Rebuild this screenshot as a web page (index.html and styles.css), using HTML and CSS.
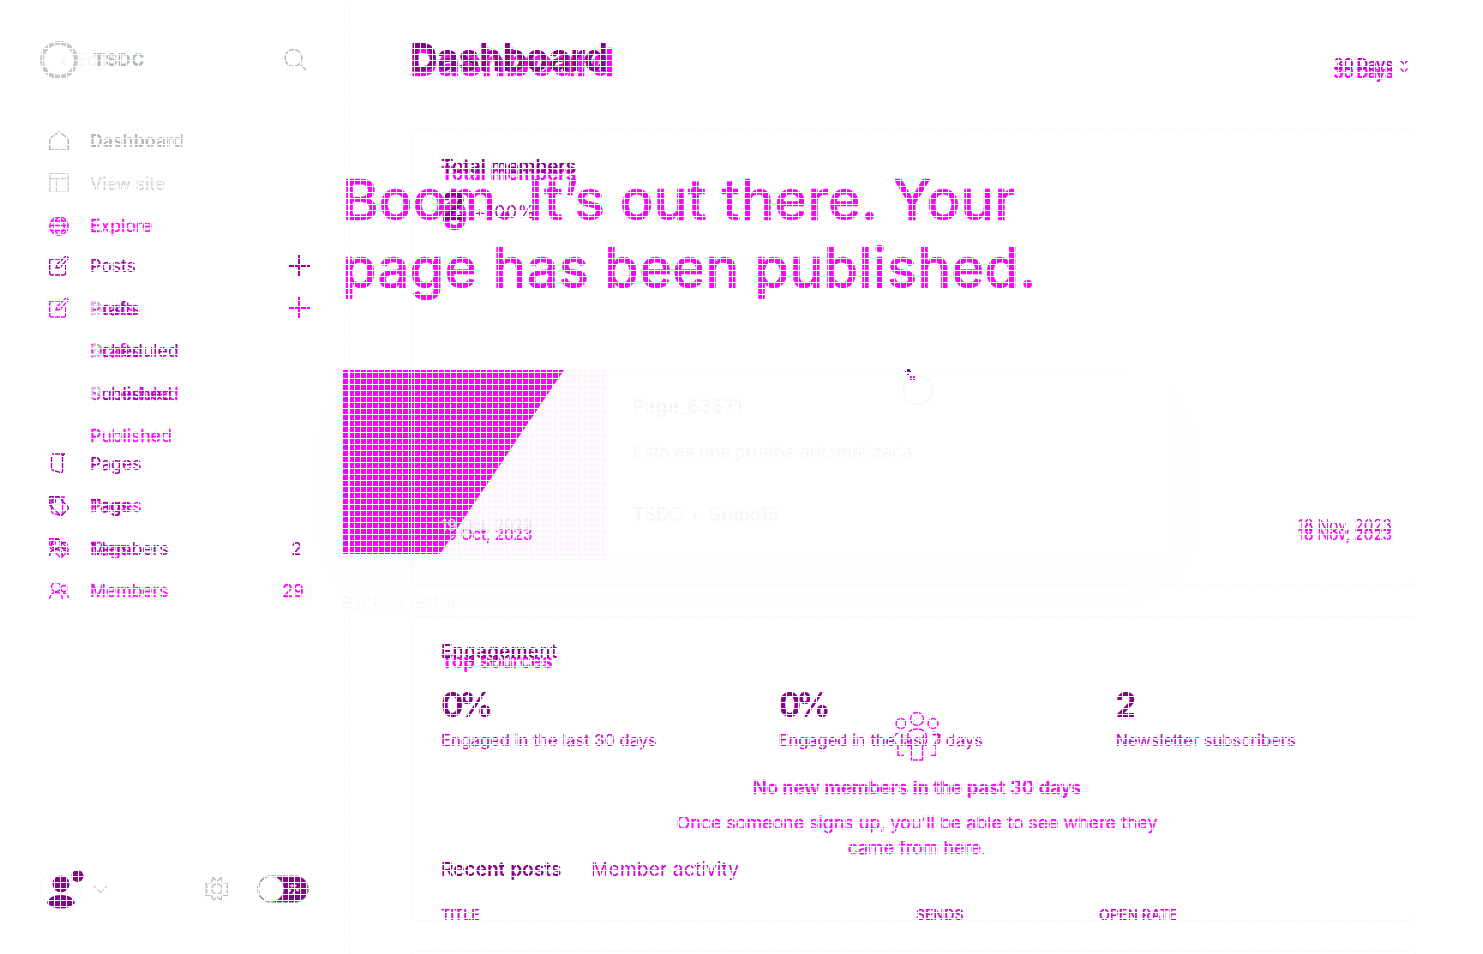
FILE: index.html
```html
<!DOCTYPE html>
<html lang="en">
<head>
<meta charset="utf-8">
<title>Dashboard</title>
<link rel="stylesheet" href="styles.css">
</head>
<body>
<svg width="0" height="0" class="defs">
  <symbol id="home" viewBox="0 0 20 20"><path d="M.7 19V7.5L10 .8l9.3 6.7V19z"/></symbol>
  <symbol id="layout" viewBox="0 0 20 20"><path d="M.7.7h18.6v18.6H.7zM.7 5.5h18.6M7.5 5.5v13.8"/></symbol>
  <symbol id="globe" viewBox="0 0 20 20"><circle cx="10" cy="10" r="9.2"/><path d="M.8 9.500h18.4M2.5 5h15M2.5 14.500h15M10 .8c-7 6-7 12.400 0 18.400M10 .8c7 6 7 12.400 0 18.400"/></symbol>
  <symbol id="edit" viewBox="0 0 20 20"><path d="M12 3H2.500Q.7 3 .7 5v12q0 2 2 2h12q2 0 2-2V8M7 12l1-3.500L17 0l2.500 2-8.500 9.500z"/></symbol>
  <symbol id="pages" viewBox="0 0 20 20"><path d="M3 1h13M2.500 3v12q0 2 2 2.500l7 2q2 .5 2-2V1M16 1q-2 0-2 3"/></symbol>
  <symbol id="tag" viewBox="0 0 20 20"><path d="M.8.8h8.500L19 11q1 1 0 2l-6 6q-1 1-2 0L.8 9z"/><circle cx="5" cy="5" r="1.500"/></symbol>
  <symbol id="members" viewBox="0 0 20 20"><circle cx="7" cy="6" r="4.500"/><circle cx="15" cy="7.500" r="3"/><path d="M.7 18q0-6.500 6.300-6.500T13.300 18M14 12q5 0 5.300 5"/></symbol>
  <symbol id="plus" viewBox="0 0 22 22"><path d="M11 0v22M0 11h22"/></symbol>
</svg>

<div class="screen">
  <!-- publish confirmation -->
  <section class="layer publish">
    <h1 class="boom">Boom. It’s out there. Your<br><span>page has been published.</span></h1>
    <div class="preview">
      <svg class="cover" viewBox="0 0 265 185"><path d="M0 0h221L97 184H0z"/></svg>
      <div class="meta">
        <p class="m1">Page_63571</p>
        <p class="m2">Esto es una prueba automatizada</p>
        <p class="m3"><b>TSDC</b><b>•</b><span>Grupo16</span></p>
      </div>
    </div>
    <p class="back">Back to editor</p>
  </section>

  <!-- newer dashboard -->
  <div class="layer shell new">
    <aside class="side">
      <p class="editor">‹&nbsp; Editor</p>
      <nav>
        <div class="row third"><svg><use href="#globe"/></svg><span>Explore</span></div>
        <div class="row group"><svg><use href="#edit"/></svg><span>Posts</span><svg class="plus"><use href="#plus"/></svg></div>
        <div class="row sub"><span>Drafts</span></div>
        <div class="row sub"><span>Scheduled</span></div>
        <div class="row sub"><span>Published</span></div>
        <div class="row pg"><svg><use href="#pages"/></svg><span>Pages</span></div>
        <div class="row"><svg><use href="#tag"/></svg><span>Tags</span></div>
        <div class="row"><svg><use href="#members"/></svg><span>Members</span><em class="badge">29</em></div>
      </nav>
    </aside>
    <main class="main">
      <header class="head"><h2>Dashboard</h2><span class="days"><span>30 Days</span><svg class="chev" viewBox="0 0 8 5"><path d="M.5.5 4 4 7.500.5"/></svg></span></header>
      <h3 class="total">Total members</h3>
      <p class="big">0</p>
      <div class="dates"><span>19 Oct, 2023</span><span>18 Nov, 2023</span></div>
      <h3 class="sources">Top sources</h3>
      <div class="empty">
        <svg class="people" viewBox="0 0 48 49"><circle cx="24" cy="7" r="6.500"/><circle cx="8" cy="11.500" r="5"/><circle cx="40" cy="11.500" r="5"/><path d="M18.500 48V34q-4-1-4-6v-3q0-8 9.500-8t9.500 8v3q0 5-4 6v14zM11 43.500H5V33q-4-1-4-6 0-6 7-7M37 43.500h6V33q4-1 4-6 0-6-7-7"/></svg>
        <b>No new members in the past 30 days</b>
        <p>Once someone signs up, you’ll be able to see where they<br>came from here.</p>
      </div>
    </main>
  </div>

  <!-- earlier dashboard -->
  <div class="layer shell old">
    <aside class="side ruled">
      <div class="brand"><i class="ring"></i><b>TSDC</b><svg class="search" viewBox="0 0 22 22"><circle cx="9.500" cy="9" r="8.500"/><path d="m16 15 6 6"/></svg></div>
      <nav>
        <div class="row on"><svg><use href="#home"/></svg><b>Dashboard</b></div>
        <div class="row dim"><svg><use href="#layout"/></svg><span>View site</span></div>
        <div class="row group"><svg><use href="#edit"/></svg><span>Posts</span><svg class="plus"><use href="#plus"/></svg></div>
        <div class="row sub"><span><i>D</i>rafts</span></div>
        <div class="row sub"><span><i>S</i>cheduled</span></div>
        <div class="row sub"><span><i>P</i>ublished</span></div>
        <div class="row pg"><svg><use href="#pages"/></svg><span>Pages</span></div>
        <div class="row"><svg><use href="#tag"/></svg><span>Tags</span></div>
        <div class="row"><svg><use href="#members"/></svg><span>Members</span><em>2</em></div>
      </nav>
      <div class="foot">
        <svg class="avatar" viewBox="0 0 70 44"><circle class="halo" cx="21" cy="22" r="20.500"/><circle cx="21" cy="17" r="8.500"/><path d="M7 36q2-8 14-8t14 8q-5 5.500-14 5.500T7 36z"/><circle cx="37.500" cy="9" r="6"/><path class="line" d="m54 19 6.500 6.500L67 19"/></svg>
        <svg class="gear" viewBox="0 0 26 26"><circle cx="13" cy="13" r="5.200"/><path d="m9 1.500 4 3.500 4-3.500 1.500 5.500 6-.5-1.500 4.500 1.500 2-1.500 2 1.500 4.500-6-.5-1.500 5.500-4-3.500-4 3.500L7.500 19l-6 .5L3 15l-1.500-2L3 11 1.500 6.500l6 .5z"/></svg>
        <div class="toggle"><i></i><span></span></div>
      </div>
    </aside>
    <main class="main">
      <header class="head"><h2>Dashboard</h2><span class="days"><span>30 Days</span><svg class="chev" viewBox="0 0 8 5"><path d="M.5.5 4 4 7.500.5"/></svg></span></header>
      <section class="card c1">
        <h3 class="total">Total members</h3>
        <p class="big"><span>2</span><small>+100%</small></p>
        <div class="dates"><span>19 Oct, 2023</span><span>18 Nov, 2023</span></div>
      </section>
      <section class="card c2">
        <h3 class="eng">Engagement</h3>
        <div class="stats">
          <div><b>0%</b><span>Engaged in the last 30 days</span></div>
          <div><b>0%</b><span>Engaged in the last 7 days</span></div>
          <div><b>2</b><span>Newsletter subscribers</span></div>
        </div>
        <div class="tabs"><b>Recent posts</b><span>Member activity</span></div>
        <div class="cols"><span>TITLE</span><span>SENDS</span><span>OPEN RATE</span></div>
      </section>
      <section class="card c3"></section>
    </main>
  </div>
  <div class="layer spot"><svg viewBox="0 0 32 40"><circle class="o" cx="15" cy="22" r="14.500"/><path class="a" d="M4 1h3v2h1v2H4zM2 3h1v1H2zM4 6h2v1H4z"/><path class="b" d="M7 8h5v4H7z"/></svg></div>
  <div class="layer mesh"></div>
</div>
</body>
</html>
```
FILE: styles.css
```css
* { box-sizing: border-box; margin: 0; padding: 0; }
body { background: #fff; font-family: Inter, "Liberation Sans", sans-serif; overflow: hidden; }
i, em { font-style: normal; }
svg { fill: none; stroke: currentColor; stroke-width: 1.4; flex: none; overflow: visible; }
.defs { position: absolute; }
.screen { position: relative; width: 1483px; height: 954px; overflow: hidden; }
.layer { position: absolute; inset: 0; }
.mesh {
  background:
    repeating-linear-gradient(90deg, #fff 0 1px, transparent 1px 6px),
    repeating-linear-gradient(#fff 0 1px, transparent 1px 6px);
}

/* publish confirmation */
.publish { padding: 166px 0 0 343px; color: #f5f5f5; }
.boom { font-size: 56px; line-height: 68px; font-weight: 500; letter-spacing: .05px; color: #f0f; -webkit-text-stroke: .5px #f0f; white-space: nowrap; height: 204px; margin-left: -1px; }
.boom span { letter-spacing: .25px; }
.preview { display: flex; width: 826px; height: 185px; background: #fff; box-shadow: 0 25px 70px rgba(0,0,0,.018); }
.cover { width: 265px; height: 185px; background: #faf6fb; fill: #f0f; stroke: none; }
.meta { padding: 25px 0 0 25px; }
.m1 { font-size: 19px; font-weight: 600; line-height: 24px; }
.m2 { font-size: 17.8px; line-height: 24px; margin-top: 21px; }
.m3 { display: flex; gap: 8px; font-size: 18px; line-height: 24px; margin-top: 39px; }
.m3 b { font-weight: 600; }
.back { font-size: 17.8px; line-height: 24px; margin: 36px 0 0 -2px; color: #f8f8f8; }

/* dashboards */
.shell { display: flex; }
.side { display: flex; flex-direction: column; width: 350px; height: 954px; }
.ruled { border-right: 1px solid #f7f7f7; }
.new { color: #f0f; -webkit-text-stroke: .3px; }
.old { color: #a800a8; }
.old .row.group, .old .row.sub, .old .row.pg, .old .row.pg ~ .row { -webkit-text-stroke: .2px; }
.row { display: flex; align-items: center; height: 42.5px; padding: 0 39px 0 49px; font-size: 17.6px; }
.row svg { width: 20px; height: 20px; margin-right: 21px; }
.row .plus { width: 22px; height: 22px; margin: 0 1px 0 auto; stroke-width: 2; }
.ruled .row .plus { margin-right: 0; }
.row em { margin: 0 9px 0 auto; }
.row .badge { margin: 0 -2px 0 auto; padding: 0 9px 0 10px; line-height: 28px; border-radius: 14px; background: #fafcfc; }
.ruled .row em { margin-right: 8px; }
.row.sub { padding-left: 90px; }
.row.sub i { color: #ccc; }
.row.pg { margin-top: 27.5px; }
.on { color: #b4b4b4; }
.on b { font-weight: 600; letter-spacing: .1px; }
.dim { color: #cfcfcf; }
.new nav { padding-top: 132.5px; }
.row.group { margin-top: 40.5px; }
.new .row.group { margin-top: 40px; }
.ruled .row.group { margin-top: 40.2px; }
.editor { height: 72px; padding: 47px 0 0 60px; font-size: 17.5px; line-height: 25px; color: #f3f3f3; }
.brand { display: flex; align-items: center; height: 119.5px; padding-left: 40px; color: #b4b4b4; font-size: 18px; }
.brand b { letter-spacing: .4px; }
.ring { width: 38px; height: 38px; border: 4px solid #c8c8c8; border-radius: 50%; margin-right: 15px; }
.search { width: 22px; height: 22px; margin-left: auto; margin-right: 43px; }
.foot { display: flex; align-items: center; height: 44px; padding-left: 40px; margin: auto 0 43px; color: #bbb; }
.avatar { width: 70px; height: 44px; fill: #8b008b; stroke: none; }
.avatar .halo { fill: none; stroke: #f7f7f7; }
.avatar .line { fill: none; stroke: #ccc; stroke-width: 1.3; }
.gear { width: 26px; height: 26px; margin-left: 94px; }
.toggle { display: flex; align-items: center; justify-content: space-between; width: 52px; height: 28px; margin-left: 27px; border: 1px solid #bbb; border-radius: 14px; background: #8b008b; padding-right: 9px; }
.toggle i { width: 26px; height: 26px; border-radius: 50%; background: #fff; border: 1px solid #bbb; }
.toggle span { width: 11px; height: 11px; border: 3px dotted #ddd; border-radius: 50%; }

.main { flex: 1; }
.head { display: flex; justify-content: space-between; padding: 0 75px 0 60px; }
.head h2 { font-size: 38px; line-height: 46px; font-weight: 700; letter-spacing: -.6px; color: #8b008b; }
.days { display: flex; align-items: center; gap: 7px; font-size: 16.3px; font-weight: 600; letter-spacing: -.7px; height: 24px; }
.chev { width: 8px; height: 5px; margin-top: -4px; }
.old .head { padding-top: 34px; height: 129px; }
.old .days { margin-top: 18px; color: #b800b8; }
.new .head { padding-top: 39px; height: 129px; }
.new .head h2 { font-size: 38.6px; letter-spacing: -.1px; color: #f0f; }
.new .days { margin-top: 21px; }
h3 { font-size: 18.8px; line-height: 24px; font-weight: 600; }
.eng { letter-spacing: .2px; }
.big { font-size: 40px; line-height: 48px; font-weight: 700; }
.c1 .big { display: flex; }
.big small { font-size: 17.5px; font-weight: 400; line-height: 20px; margin: 20px 0 0 8px; letter-spacing: .7px; color: #a800a8; }
.dates { display: flex; justify-content: space-between; font-size: 15.2px; line-height: 20px; }
.card { width: 1006px; margin-left: 61px; border: 1px solid #f8f8f8; border-radius: 6px; padding: 0 24px 0 29px; color: #8b008b; }
.c1 { height: 457px; padding-top: 25px; }
.c1 .big { margin-top: 3px; }
.c1 .dates { margin-top: 286px; color: #c0c; }
.c1 .dates span:first-child { color: #e4e4e4; }
.c2 { height: 305px; margin-top: 30px; padding-top: 23px; }
.c3 { height: 30px; margin-top: 30px; }
.stats { display: grid; grid-template-columns: 337.5px 337px 1fr; margin-top: 21px; margin-right: -24px; }
.stats b { display: block; font-size: 33.5px; line-height: 40px; font-weight: 700; letter-spacing: -4.5px; }
.stats span { display: block; width: max-content; font-size: 16.5px; line-height: 24px; margin-top: 3px; color: #c0c; -webkit-text-stroke: .2px; }
.tabs { display: flex; gap: 30px; font-size: 19.1px; line-height: 24px; margin-top: 105px; }
.tabs b { font-weight: 600; }
.tabs span { color: #d000d0; letter-spacing: .15px; }
.cols { display: grid; grid-template-columns: 475px 183px 1fr; font-size: 14.1px; font-weight: 500; line-height: 20px; margin-top: 23.5px; color: #c0c; -webkit-text-stroke: .2px; }
.cols span { width: max-content; }
.new .total { padding: 33px 0 0 91px; }
.new .big { padding-left: 91px; margin-top: 6px; }
.new .dates { padding: 0 91px 0 91px; margin-top: 285px; }
.sources { padding-left: 91px; margin-top: 105px; }
.empty { display: flex; flex-direction: column; align-items: center; width: 1006px; margin: 38px 0 0 64px; font-size: 17.85px; text-align: center; }
.empty b { font-size: 18.4px; font-weight: 600; line-height: 24px; margin-top: 14px; }
.empty p { line-height: 25px; margin-top: 10.5px; }
.people { width: 48px; height: 49px; }
.spot { padding: 368px 0 0 903px; }
.spot svg { width: 32px; height: 40px; stroke: none; }
.spot .o { stroke: #f3f3f3; }
.spot .a { fill: #8b008b; }
.spot .b { fill: #f0f; }
```
